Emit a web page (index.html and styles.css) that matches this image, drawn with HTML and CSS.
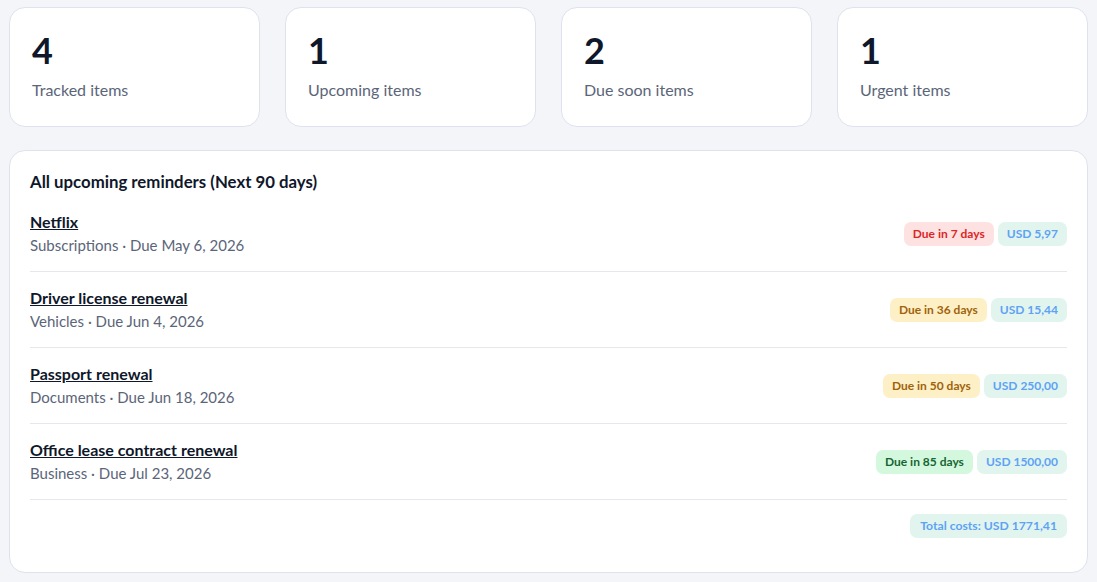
FILE: index.html
```html
<!DOCTYPE html>
<html lang="en">
  <head>
    <meta charset="UTF-8" />
    <meta name="viewport" content="width=device-width, initial-scale=1.0" />
    <title>Reminders</title>
    <link rel="stylesheet" href="styles.css">
  </head>

  <body>
    <section class="stats">
      <div class="stat-card">
        <div class="stat-value">4</div>
        <div class="stat-label">Tracked items</div>
      </div>
      <div class="stat-card">
        <div class="stat-value">1</div>
        <div class="stat-label">Upcoming items</div>
      </div>
      <div class="stat-card">
        <div class="stat-value">2</div>
        <div class="stat-label">Due soon items</div>
      </div>
      <div class="stat-card">
        <div class="stat-value">1</div>
        <div class="stat-label">Urgent items</div>
      </div>
    </section>

    <section class="reminders">
      <h2>All upcoming reminders (Next 90 days)</h2>
      <div class="reminder">
        <div class="reminder-info">
          <a href="#" class="reminder-name">Netflix</a>
          <p>Subscriptions · Due May 6, 2026</p>
        </div>
        <div class="badges">
          <span class="badge urgent">Due in 7 days</span>
          <span class="badge cost">USD 5,97</span>
        </div>
      </div>
      <div class="reminder">
        <div class="reminder-info">
          <a href="#" class="reminder-name">Driver license renewal</a>
          <p>Vehicles · Due Jun 4, 2026</p>
        </div>
        <div class="badges">
          <span class="badge soon">Due in 36 days</span>
          <span class="badge cost">USD 15,44</span>
        </div>
      </div>
      <div class="reminder">
        <div class="reminder-info">
          <a href="#" class="reminder-name">Passport renewal</a>
          <p>Documents · Due Jun 18, 2026</p>
        </div>
        <div class="badges">
          <span class="badge soon">Due in 50 days</span>
          <span class="badge cost">USD 250,00</span>
        </div>
      </div>
      <div class="reminder">
        <div class="reminder-info">
          <a href="#" class="reminder-name">Office lease contract renewal</a>
          <p>Business · Due Jul 23, 2026</p>
        </div>
        <div class="badges">
          <span class="badge later">Due in 85 days</span>
          <span class="badge cost">USD 1500,00</span>
        </div>
      </div>
      <div class="total">
        <span class="badge cost">Total costs: USD 1771,41</span>
      </div>
    </section>
  </body>
</html>
```

FILE: styles.css
```css
body {
  font-family: Lato, "Noto Sans", sans-serif;
  margin: 0;
  padding: 7px 9px;
  background-color: #f4f5f9;
  color: #0f172a;
}

.stats {
  display: grid;
  grid-template-columns: repeat(4, 1fr);
  gap: 25px;
}

.stat-card {
  height: 120px;
  box-sizing: border-box;
  padding: 24px 22px 0;
  background-color: #fff;
  border: 1px solid #dde2ec;
  border-radius: 16px;
}

.stat-value {
  font-size: 36px;
  font-weight: bold;
  line-height: 36px;
  color: #0f172a;
}

.stat-label {
  margin-top: 12px;
  font-size: 16px;
  color: #5b6579;
}

.reminders {
  margin-top: 23px;
  padding: 20px 20px 34px;
  background-color: #fff;
  border: 1px solid #dde2ec;
  border-radius: 16px;
}

.reminders h2 {
  margin: 0 0 3px;
  font-size: 16.8px;
  font-weight: bold;
  line-height: 22px;
}

.reminder {
  display: flex;
  justify-content: space-between;
  align-items: center;
  padding: 15px 0;
  border-bottom: 1px solid #e5e7ec;
}

.reminder-name {
  font-size: 16px;
  font-weight: bold;
  color: #0f172a;
  text-decoration: underline;
  line-height: 22px;
}

.reminder-info p {
  margin: 1px 0 0;
  font-size: 15px;
  color: #5b6579;
  line-height: 22px;
}

.badges {
  display: flex;
  gap: 4px;
}

.badge {
  display: inline-block;
  padding: 0 9px;
  height: 24px;
  line-height: 24px;
  font-size: 12px;
  font-weight: bold;
  border-radius: 7px;
}

.urgent {
  background-color: #fee2e2;
  color: #dc2626;
}

.soon {
  background-color: #fdf0c6;
  color: #a1620b;
}

.later {
  background-color: #d4f8de;
  color: #166534;
}

.cost {
  background-color: #e1f5ee;
  color: #5ea2f5;
}

.total {
  display: flex;
  justify-content: flex-end;
  padding-top: 14px;
}

.total .badge {
  padding: 0 10px;
  font-size: 12.2px;
}
```
